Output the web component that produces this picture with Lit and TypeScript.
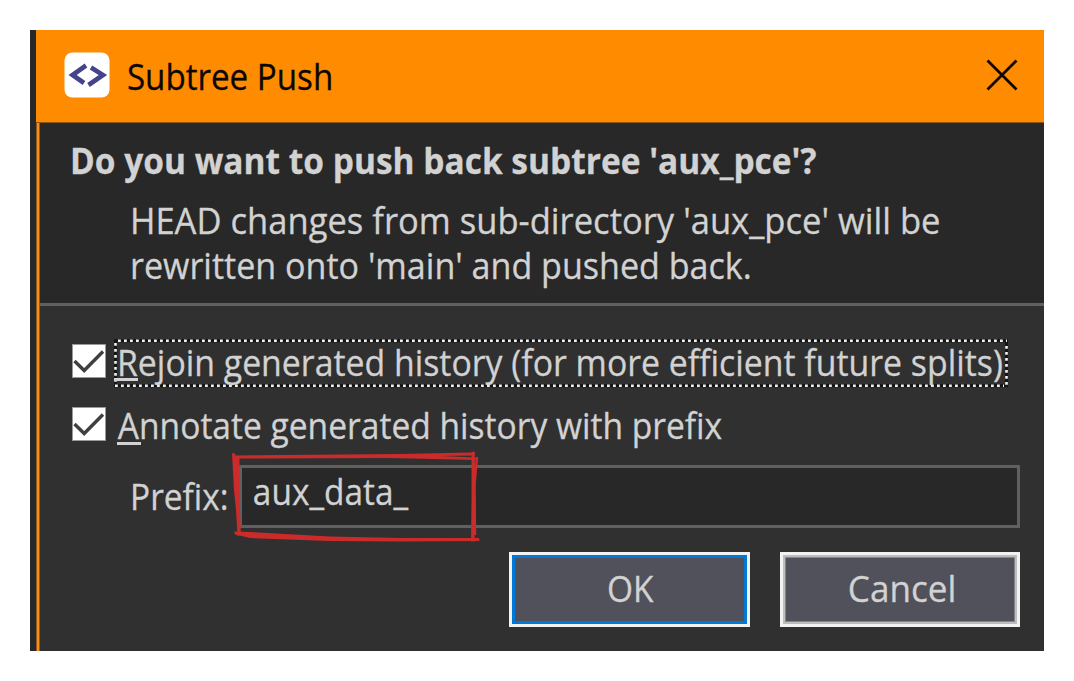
import { LitElement, html, css, svg } from "lit";
import { customElement, property, state } from "lit/decorators.js";

const FAMILY = '"Open Sans", "Noto Sans", sans-serif';

/** One line of text, condensed or widened so that its ink spans `width` pixels. */
@customElement("fit-text")
class FitText extends LitElement {
  @property() text = "";
  @property({ type: Number }) width = 100;
  @property({ type: Number }) weight = 400;
  @property({ type: Number }) size = 36;

  static styles = css`
    :host { display: block; height: 45px; flex: none; }
    .line {
      display: inline-block;
      white-space: pre;
      line-height: 47px;
      font-family: "Open Sans", "Noto Sans", sans-serif;
      transform-origin: 0 0;
      -webkit-text-stroke: 0.3px currentColor;
    }
  `;

  render() {
    const ctx = document.createElement("canvas").getContext("2d")!;
    ctx.font = `${this.weight} ${this.size}px ${FAMILY}`;
    const m = ctx.measureText(this.text);
    const scale = (this.width - 1.5) / (m.actualBoundingBoxLeft + m.actualBoundingBoxRight);
    const shift = m.actualBoundingBoxLeft * scale + 1.8;
    return html`<style>:host { width: ${this.width}px; }</style><span
      class="line"
      style="font-size:${this.size}px;font-weight:${this.weight};transform:translateX(${shift}px) scaleX(${scale})"
      >${this.text}</span>`;
  }
}

@customElement("check-row")
class CheckRow extends LitElement {
  @property() label = "";
  @property({ type: Number }) width = 100;
  @property({ type: Boolean }) focused = false;
  @state() checked = true;

  static styles = css`
    :host { display: block; height: 48px; }
    .row { display: flex; align-items: flex-start; height: 48px; }
    .box { width: 34px; height: 34px; margin-top: 5px; flex: none; display: block; }
    .label { position: relative; margin-left: 8px; width: 894px; height: 48px; }
    .text { padding-left: 2px; }
    .focused .text { padding-left: 4px; }
    .marks { position: absolute; left: 0; top: 0; }
  `;

  render() {
    return html`<div class="row ${this.focused ? "focused" : ""}" @click=${() => (this.checked = !this.checked)}>
      <svg class="box" viewBox="0 0 34 34">
        <rect x=".5" y=".5" width="33" height="33" fill="#fff" stroke="#999" />
        ${this.checked ? svg`<path d="M2.5 17L12.2 26.5L31 7.5" fill="none" stroke="#404040" stroke-width="3.4" />` : ""}
      </svg>
      <div class="label">
        <svg class="marks" width="894" height="50" viewBox="0 0 894 50">
          ${this.focused
            ? svg`<rect x="1.5" y="1.7" width="891" height="45" fill="none" stroke="#141414" stroke-width="3" />
                <path d="M4 1.7H893M1 46.7H890M1.5 4V45M892.5 7V46" fill="none" stroke="#f0f0f0" stroke-width="2.6" stroke-dasharray="2.8 3.2" />
                <rect x="0" y="39" width="24" height="3" fill="#d2d2d2" />`
            : svg`<rect x="3" y="40" width="24" height="3" fill="#d2d2d2" />`}
        </svg>
        <div class="text"><fit-text .text=${this.label} .width=${this.width}></fit-text></div>
      </div>
    </div>`;
  }
}

@customElement("app-root")
class AppRoot extends LitElement {
  static styles = css`
    :host { display: block; width: 1074px; height: 681px; background: #fff; box-sizing: border-box; padding: 30px; }
    .window { position: relative; display: flex; width: 1014px; height: 621px; background: #262829; }
    .edge { width: 6px; background: #25292b; flex: none; }
    .accent { width: 4px; flex: none; box-sizing: border-box; background: #f88f14; border-left: 1px solid #94591a; border-right: 1px solid #94591a; }
    .main { width: 1004px; display: flex; flex-direction: column; }
    .title { height: 93px; flex: none; box-sizing: border-box; margin-left: -4px; padding: 0 26px 0 28px; background: #ff8c00; border-bottom: 1px solid #8d5510; display: flex; align-items: flex-start; color: #0c0600; }
    .app-icon { margin-top: 22px; flex: none; }
    .title-text { margin: 23px 0 0 16px; }
    .close { margin: 29px 0 0 auto; }
    .header { height: 180px; flex: none; box-sizing: border-box; padding: 14px 0 0 31px; background: #282828; color: #d2d2d2; }
    .details { padding: 15px 0 0 60px; }
    .rule { height: 3px; flex: none; background: #606060; }
    .body { flex: 1; padding: 33px 24px 0 32px; background: #303030; color: #d2d2d2; display: flex; flex-direction: column; }
    .second { margin-top: 15px; }
    .field { display: flex; margin: 15px 0 0 59px; }
    .field-label { margin-top: 8px; width: 108px; flex: none; }
    .input { width: 781px; height: 63px; flex: none; box-sizing: border-box; border: 3px solid #606060; background: #282828; padding: 0 0 0 10px; }
    .buttons { display: flex; justify-content: flex-end; gap: 30px; margin-top: 24px; }
    .button { box-sizing: border-box; width: 241px; height: 75px; background: #50515a; border: 3px solid #f2f2f2; display: flex; justify-content: center; padding: 10px 0 0 1px; }
    .button.ok { box-shadow: inset 0 0 0 3px #0078d7; }
    .button.cancel { width: 240px; box-shadow: inset 0 0 0 2px #bdbdbd, inset 0 0 0 3px #85858a; }
    .sketch { position: absolute; left: 0; top: 0; pointer-events: none; }
  `;

  render() {
    return html`<div class="window">
      <div class="edge"></div>
      <div class="accent"></div>
      <div class="main">
        <div class="title">
          <svg class="app-icon" width="46" height="46" viewBox="0 0 46 46">
            <rect x=".5" y=".5" width="45" height="45" rx="8" fill="#fff" />
            <path d="M22 13.5L8.5 23L20 31M27 15.5L39 23L24.5 33" fill="none" stroke="#45438c" stroke-width="4.6" />
          </svg>
          <fit-text class="title-text" .text=${"Subtree Push"} .width=${205}></fit-text>
          <svg class="close" width="32" height="32" viewBox="0 0 32 32">
            <path d="M1.5 1.5L30.5 30.5M30.5 1.5L1.5 30.5" stroke="#100800" stroke-width="2.8" />
          </svg>
        </div>
        <div class="header">
          <fit-text .text=${"Do you want to push back subtree 'aux_pce'?"} .width=${745} .weight=${700}></fit-text>
          <div class="details">
            <fit-text .text=${"HEAD changes from sub-directory 'aux_pce' will be"} .width=${808}></fit-text>
            <fit-text .text=${"rewritten onto 'main' and pushed back."} .width=${618}></fit-text>
          </div>
        </div>
        <div class="rule"></div>
        <div class="body">
          <check-row focused .label=${"Rejoin generated history (for more efficient future splits)"} .width=${884}></check-row>
          <check-row class="second" .label=${"Annotate generated history with prefix"} .width=${606}></check-row>
          <div class="field">
            <div class="field-label"><fit-text .text=${"Prefix:"} .width=${95}></fit-text></div>
            <div class="input"><fit-text .text=${"aux_data_"} .width=${156}></fit-text></div>
          </div>
          <div class="buttons">
            <div class="button ok"><fit-text .text=${"OK"} .width=${47}></fit-text></div>
            <div class="button cancel"><fit-text .text=${"Cancel"} .width=${106}></fit-text></div>
          </div>
        </div>
      </div>
      <svg class="sketch" width="1014" height="621" viewBox="30 30 1014 621">
        <g fill="#cc2b2b">
          <path d="M236 455.5L400 454L471 452.5L475 453L475 455.5L440 456L476 457.5L475.5 460L390 458L236 458.5Z" />
          <path d="M232 453.5L234.5 453L236.5 457L239.5 456L239.5 500L241 535L237.5 536L236 510L234 490Z" />
          <path d="M234 531.5L250 532L330 536.5L400 538L479 538L479.5 541L400 541.5L330 541L250 538L235 534.5Z" />
          <path d="M471.5 452L474.5 451.5L475 465L475.5 500L474.5 541.5L471 541.5L471.5 500Z" />
        </g>
        <path d="M477 457L474.5 485L475 535" fill="none" stroke="#cc2b2b" stroke-width="2.4" />
      </svg>
    </div>`;
  }
}
